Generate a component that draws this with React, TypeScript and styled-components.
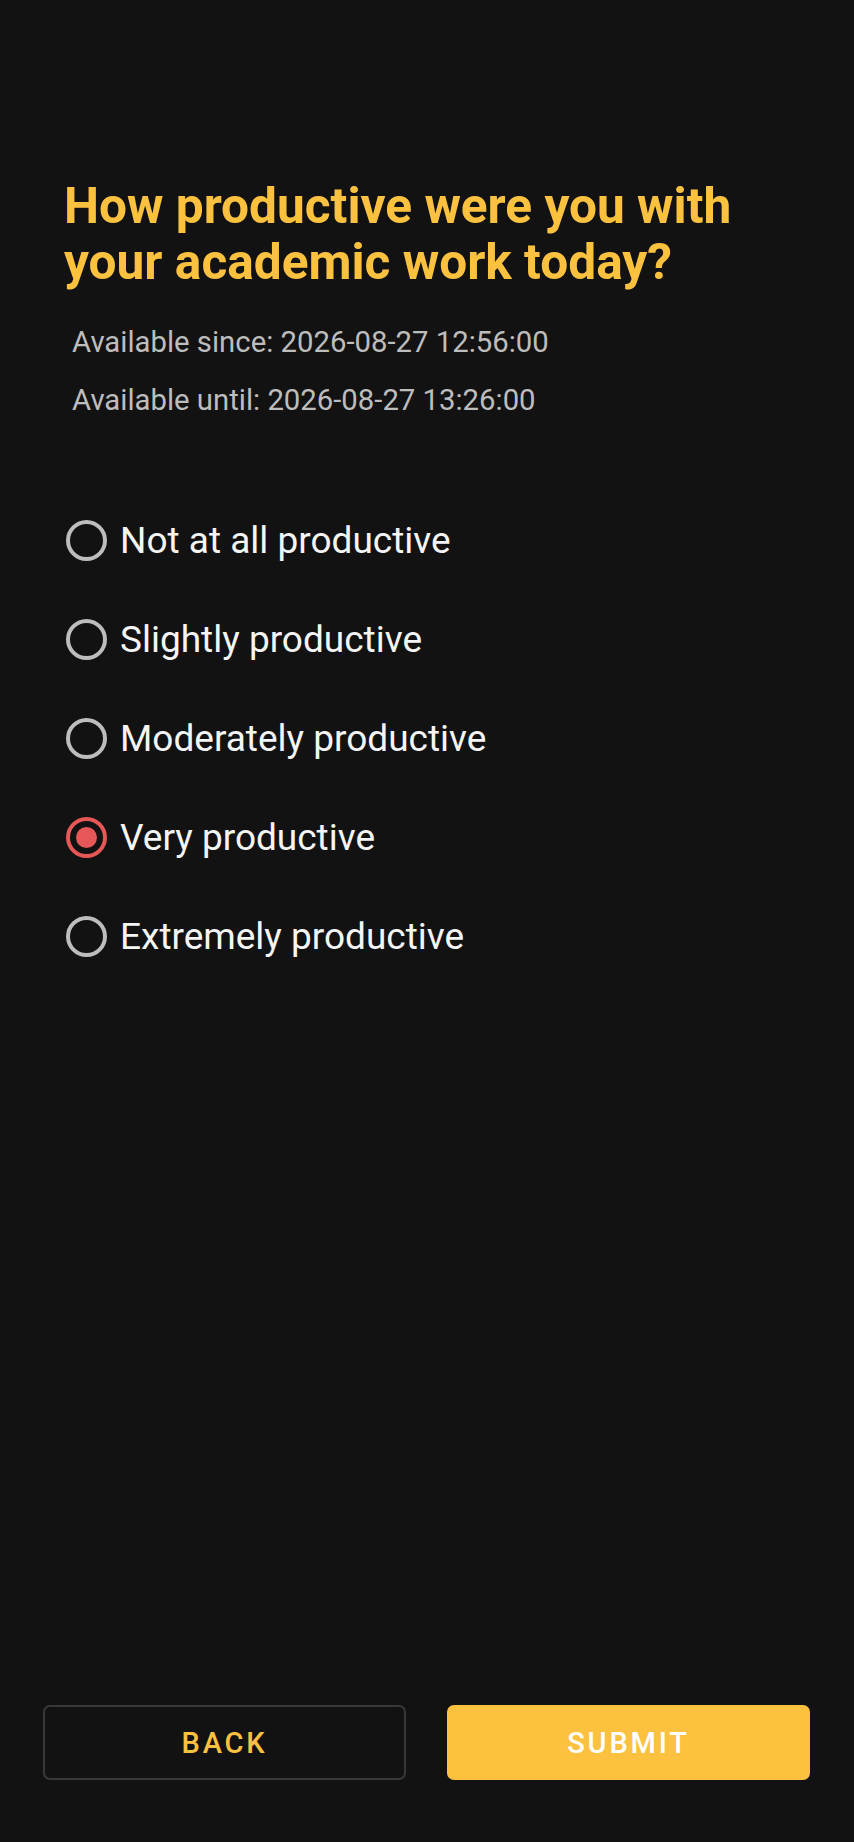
import React, { useState } from "react";
import styled, { createGlobalStyle } from "styled-components";

const Global = createGlobalStyle`
  html, body { margin: 0; padding: 0; background: #121212; }
  body { font-family: Roboto, "Noto Sans", sans-serif; }
`;

const Page = styled.div`
  min-height: 1842px;
  box-sizing: border-box;
  display: flex;
  flex-direction: column;
  background: #121212;
  padding: 178px 0 62px;
`;

const Content = styled.div`
  padding: 0 24px 0 62px;
`;

const Title = styled.h1`
  margin: 0 0 0 2px;
  font-size: 49.6px;
  line-height: 56px;
  font-weight: 700;
  color: #fcc13f;
`;

const Meta = styled.div`
  margin-top: 35px;
  padding-left: 10px;
  display: flex;
  flex-direction: column;
  gap: 23.5px;
`;

const MetaLine = styled.div`
  font-size: 29.3px;
  line-height: 34px;
  color: #bdbdbd;
`;

const Options = styled.div`
  margin-top: 103px;
  padding-left: 4px;
  display: flex;
  flex-direction: column;
  gap: 58px;
`;

const Option = styled.label`
  display: flex;
  align-items: center;
  gap: 13px;
  cursor: pointer;
  height: 41px;
`;

const Radio = styled.span<{ $checked: boolean }>`
  box-sizing: border-box;
  width: 41px;
  height: 41px;
  border-radius: 50%;
  border: 4px solid ${(p) => (p.$checked ? "#e65757" : "#bdbdbd")};
  display: flex;
  align-items: center;
  justify-content: center;
  flex-shrink: 0;
  &::after {
    content: "";
    display: ${(p) => (p.$checked ? "block" : "none")};
    width: 21px;
    height: 21px;
    border-radius: 50%;
    background: #e65757;
  }
`;

const OptionText = styled.span`
  font-size: 37px;
  color: #f5f5f5;
`;

const Footer = styled.div`
  margin-top: auto;
  padding: 0 44px 0 43px;
  display: grid;
  grid-template-columns: 1fr 1fr;
  gap: 41px;
`;

const Button = styled.button<{ $primary?: boolean }>`
  height: 75px;
  border-radius: 7px;
  font-family: Roboto, sans-serif;
  font-size: 29px;
  font-weight: 500;
  letter-spacing: 2.8px;
  text-transform: uppercase;
  cursor: pointer;
  border: 2px solid ${(p) => (p.$primary ? "#fcc13f" : "#383838")};
  background: ${(p) => (p.$primary ? "#fcc13f" : "transparent")};
  color: ${(p) => (p.$primary ? "#ffffff" : "#fcc13f")};
`;

const options = [
  "Not at all productive",
  "Slightly productive",
  "Moderately productive",
  "Very productive",
  "Extremely productive",
];

export default function App() {
  const [selected, setSelected] = useState(3);
  return (
    <>
      <Global />
      <Page>
        <Content>
          <Title>How productive were you with your academic work today?</Title>
          <Meta>
            <MetaLine>Available since: 2026-08-27 12:56:00</MetaLine>
            <MetaLine>Available until: 2026-08-27 13:26:00</MetaLine>
          </Meta>
          <Options>
            {options.map((o, i) => (
              <Option key={o} onClick={() => setSelected(i)}>
                <Radio $checked={selected === i} />
                <OptionText>{o}</OptionText>
              </Option>
            ))}
          </Options>
        </Content>
        <Footer>
          <Button>Back</Button>
          <Button $primary>Submit</Button>
        </Footer>
      </Page>
    </>
  );
}
